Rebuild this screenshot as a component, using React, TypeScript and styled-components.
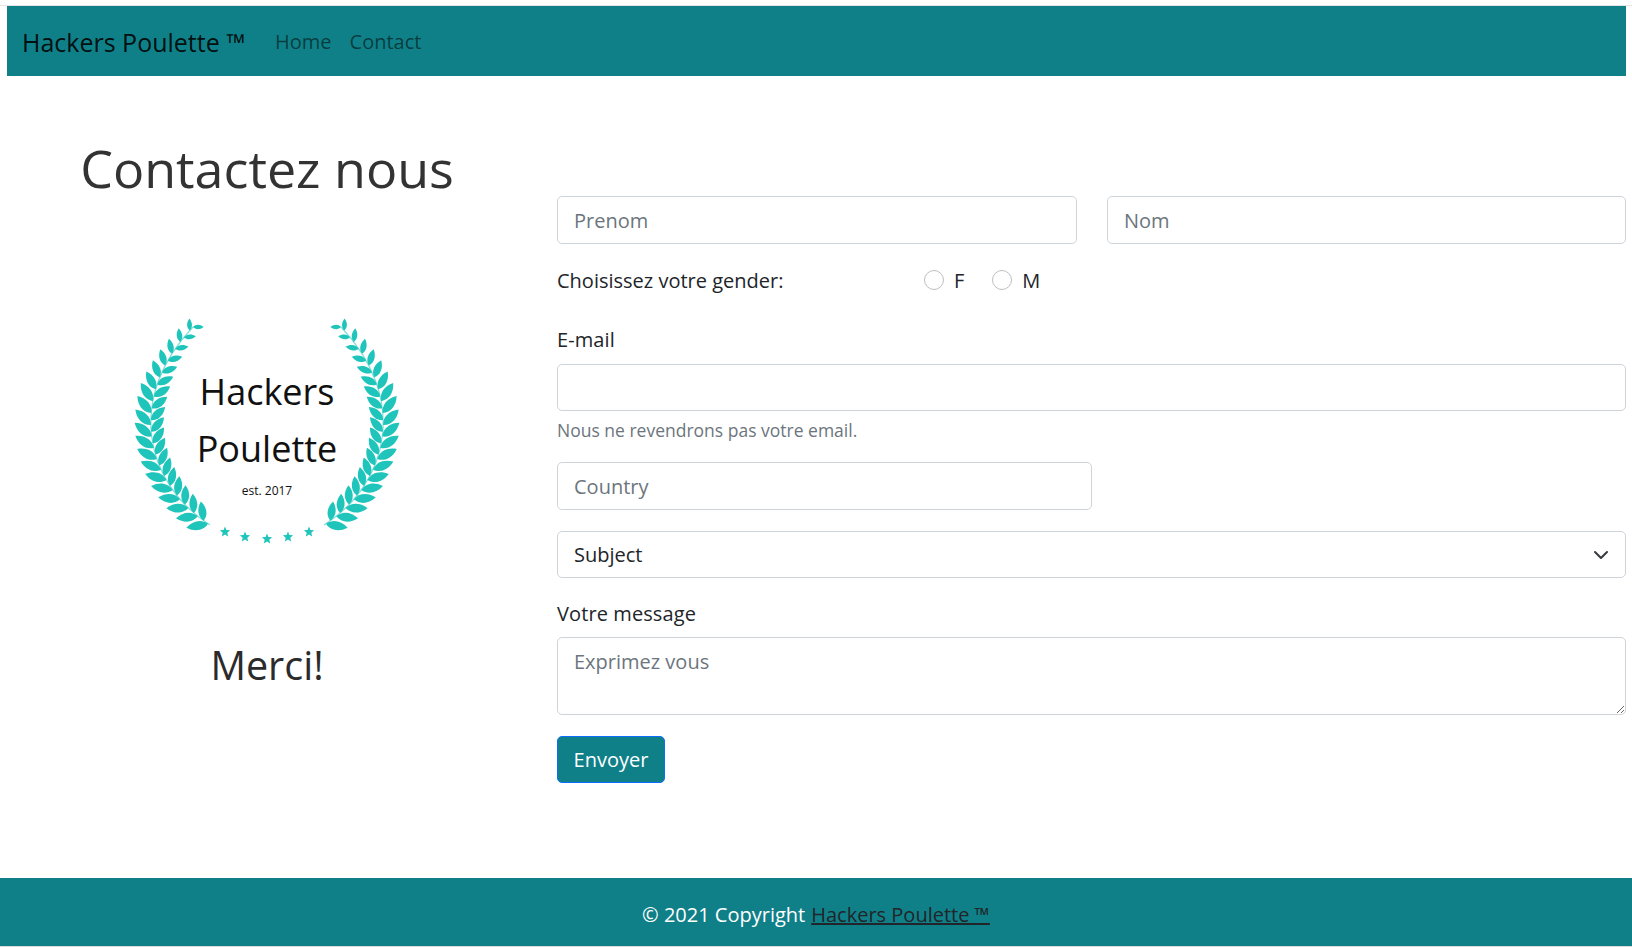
import React from "react"
import styled, { createGlobalStyle } from "styled-components"

const TEAL = "#0f8088"
const LEAF = "#1fc4ba"
const FONT = `"Open Sans", "Noto Sans", sans-serif`

const GlobalStyle = createGlobalStyle`
  * { box-sizing: border-box; }
  html, body { margin: 0; padding: 0; background: #fff; }
  body { font-family: ${FONT}; font-size: 20px; line-height: 30px; color: #212529; }
`

const Page = styled.div`
  min-height: 947px;
  display: flex;
  flex-direction: column;
`

const TopRule = styled.div`
  height: 6px;
  border-bottom: 1px solid #e4e4e4;
`

const Content = styled.div`
  flex: 1;
  margin: 0 6px 0 7px;
  display: flex;
  flex-direction: column;
`

const Navbar = styled.nav`
  height: 70px;
  background: ${TEAL};
  display: flex;
  align-items: center;
  padding: 2px 0 0 15px;
`

const Brand = styled.a`
  font-size: 25px;
  color: rgba(0, 0, 0, 0.9);
  width: 253px;
  white-space: nowrap;
`

const NavLink = styled.a`
  font-size: 20px;
  color: rgba(0, 0, 0, 0.55);
  margin-right: 18px;
`

const Main = styled.main`
  display: grid;
  grid-template-columns: 520px 1fr;
  column-gap: 30px;
`

const Aside = styled.section`
  display: flex;
  flex-direction: column;
  align-items: center;
  padding-top: 58px;
`

const Title = styled.h1`
  margin: 0;
  font-size: 52px;
  line-height: 67px;
  font-weight: 400;
  color: #333;
  white-space: nowrap;
`

const Logo = styled.svg`
  display: block;
  margin-top: 111px;
  width: 300px;
  height: 240px;
`

const LogoText = styled.text<{ $size: number }>`
  font-family: ${FONT};
  font-size: ${p => p.$size}px;
  fill: #111;
  text-anchor: middle;
`

const Thanks = styled.h2`
  margin: 89px 0 0;
  font-size: 39.5px;
  line-height: 48px;
  font-weight: 400;
  color: #2b2b2b;
`

const Form = styled.form`
  padding-top: 120px;
  display: flex;
  flex-direction: column;
`

const NameRow = styled.div`
  display: grid;
  grid-template-columns: 520px 1fr;
  column-gap: 30px;
`

const fieldCss = `
  display: block;
  width: 100%;
  height: 48px;
  padding: 8px 16px;
  font-family: ${FONT};
  font-size: 20px;
  line-height: 30px;
  color: #212529;
  background-color: #fff;
  border: 1px solid #ced4da;
  border-radius: 5px;
  outline: none;
  &::placeholder { color: #6c757d; opacity: 1; }
`

const Input = styled.input<{ $width?: number; $height?: number; $top?: number }>`
  ${fieldCss}
  ${p => (p.$width ? `width: ${p.$width}px;` : "")}
  ${p => (p.$height ? `height: ${p.$height}px;` : "")}
  margin-top: ${p => p.$top ?? 0}px;
`

const Select = styled.select`
  ${fieldCss}
  height: 47px;
  margin-top: 21px;
  appearance: none;
  background-image: url("data:image/svg+xml,%3csvg xmlns='http://www.w3.org/2000/svg' viewBox='0 0 16 16'%3e%3cpath fill='none' stroke='%23343a40' stroke-linecap='round' stroke-linejoin='round' stroke-width='2' d='M2 5l6 6 6-6'/%3e%3c/svg%3e");
  background-repeat: no-repeat;
  background-position: right 16px center;
  background-size: 16px 16px;
`

const TextArea = styled.textarea`
  ${fieldCss}
  height: 78px;
  margin-top: 8px;
  padding-top: 9px;
`

const GenderRow = styled.div`
  display: grid;
  grid-template-columns: 367px auto auto 1fr;
  align-items: center;
  margin-top: 22px;
`

const RadioLabel = styled.label`
  display: flex;
  align-items: center;
  gap: 10px;
  margin-right: 28px;
`

const Radio = styled.input`
  appearance: none;
  width: 20px;
  height: 20px;
  margin: 0 0 2px;
  background: #fff;
  border: 1px solid #bfbfbf;
  border-radius: 50%;
`

const FieldLabel = styled.label<{ $top: number }>`
  display: block;
  margin-top: ${p => p.$top}px;
  letter-spacing: 0.1px;
`

const Help = styled.small`
  display: block;
  margin-top: 6px;
  font-size: 17.5px;
  line-height: 26px;
  color: #6c757d;
`

const Submit = styled.button`
  align-self: flex-start;
  width: 108px;
  height: 47px;
  margin-top: 21px;
  padding: 0;
  font-family: ${FONT};
  font-size: 20px;
  color: #fff;
  background: ${TEAL};
  border: 1px solid #0d6efd;
  border-radius: 5px;
`

const Footer = styled.footer`
  height: 69px;
  padding-top: 6px;
  background: ${TEAL};
  border-bottom: 1px solid #dcdcdc;
  color: #fff;
  display: flex;
  align-items: center;
  justify-content: center;
`

const FooterLink = styled.a`
  margin-left: 6px;
  color: #212529;
  text-decoration: underline;
`

function leaf(len: number, wid: number) {
  return `M0 0C${len * 0.25} ${-wid} ${len * 0.65} ${-wid} ${len} 0C${len * 0.65} ${wid} ${len * 0.25} ${wid} 0 0Z`
}

function Branch({ flip }: { flip?: boolean }) {
  // stem runs from the bottom of the wreath up to its tip
  const p = [[93, 213], [26, 170], [10, 84], [76, 15]]
  const at = (t: number) => {
    const u = 1 - t
    const c = [u * u * u, 3 * u * u * t, 3 * u * t * t, t * t * t]
    const d = [-3 * u * u, 3 * u * u - 6 * u * t, 6 * u * t - 3 * t * t, 3 * t * t]
    return {
      x: c.reduce((s, v, i) => s + v * p[i][0], 0),
      y: c.reduce((s, v, i) => s + v * p[i][1], 0),
      a: (Math.atan2(d.reduce((s, v, i) => s + v * p[i][1], 0), d.reduce((s, v, i) => s + v * p[i][0], 0)) * 180) / Math.PI,
    }
  }
  const sizeAt = (t: number) => (t > 0.65 ? 22 - (t - 0.65) * 30 : 22)
  const pairs = Array.from({ length: 19 }, (_, i) => 0.01 + i / 18.5)
  return (
    <g transform={flip ? "translate(300 0) scale(-1 1)" : undefined} fill={LEAF}>
      <path d={`M${p[0][0]} ${p[0][1]}C${p[1][0]} ${p[1][1]} ${p[2][0]} ${p[2][1]} ${p[3][0]} ${p[3][1]}`} fill="none" stroke="#7fe0da" strokeWidth="1.2" />
      {pairs.map(t => {
        // outer and inner leaves sit half a step apart along the stem
        const outer = at(t)
        const inner = at(Math.min(t + 0.022, 1))
        const size = sizeAt(t)
        return (
          <g key={t}>
            <path d={leaf(size, size * 0.27)} transform={`translate(${outer.x.toFixed(1)} ${outer.y.toFixed(1)}) rotate(${(outer.a - 44).toFixed(1)})`} />
            <path d={leaf(size * 0.88, size * 0.24)} transform={`translate(${inner.x.toFixed(1)} ${inner.y.toFixed(1)}) rotate(${(inner.a + 46).toFixed(1)})`} />
          </g>
        )
      })}
    </g>
  )
}

function Star({ x, y }: { x: number; y: number }) {
  const pts = Array.from({ length: 10 }, (_, i) => {
    const r = i % 2 ? 2.4 : 5.4
    const a = (Math.PI * i) / 5 - Math.PI / 2
    return `${(x + r * Math.cos(a)).toFixed(1)},${(y + r * Math.sin(a)).toFixed(1)}`
  })
  return <polygon points={pts.join(" ")} fill={LEAF} />
}

const stars = [[108, 220], [128, 225], [150, 227], [171, 225], [192, 220]]

export default function App() {
  return (
    <Page>
      <GlobalStyle />
      <TopRule />
      <Content>
        <Navbar>
          <Brand>Hackers Poulette ™</Brand>
          <NavLink>Home</NavLink>
          <NavLink>Contact</NavLink>
        </Navbar>
        <Main>
          <Aside>
            <Title>Contactez nous</Title>
            <Logo viewBox="0 0 300 240">
              <Branch />
              <Branch flip />
              {stars.map(([x, y]) => <Star key={x} x={x} y={y} />)}
              <LogoText $size={36} x={150} y={93}>Hackers</LogoText>
              <LogoText $size={36} x={150} y={150}>Poulette</LogoText>
              <LogoText $size={12} x={150} y={183}>est. 2017</LogoText>
            </Logo>
            <Thanks>Merci!</Thanks>
          </Aside>
          <Form>
            <NameRow>
              <Input placeholder="Prenom" />
              <Input placeholder="Nom" />
            </NameRow>
            <GenderRow>
              <span>Choisissez votre gender:</span>
              <RadioLabel><Radio type="radio" name="gender" />F</RadioLabel>
              <RadioLabel><Radio type="radio" name="gender" />M</RadioLabel>
            </GenderRow>
            <FieldLabel $top={29}>E-mail</FieldLabel>
            <Input $height={47} $top={9} />
            <Help>Nous ne revendrons pas votre email.</Help>
            <Input $width={535} $top={19} placeholder="Country" />
            <Select defaultValue="subject">
              <option value="subject">Subject</option>
            </Select>
            <FieldLabel $top={21}>Votre message</FieldLabel>
            <TextArea placeholder="Exprimez vous" />
            <Submit type="button">Envoyer</Submit>
          </Form>
        </Main>
      </Content>
      <Footer>
        © 2021 Copyright <FooterLink>Hackers Poulette ™</FooterLink>
      </Footer>
    </Page>
  )
}
